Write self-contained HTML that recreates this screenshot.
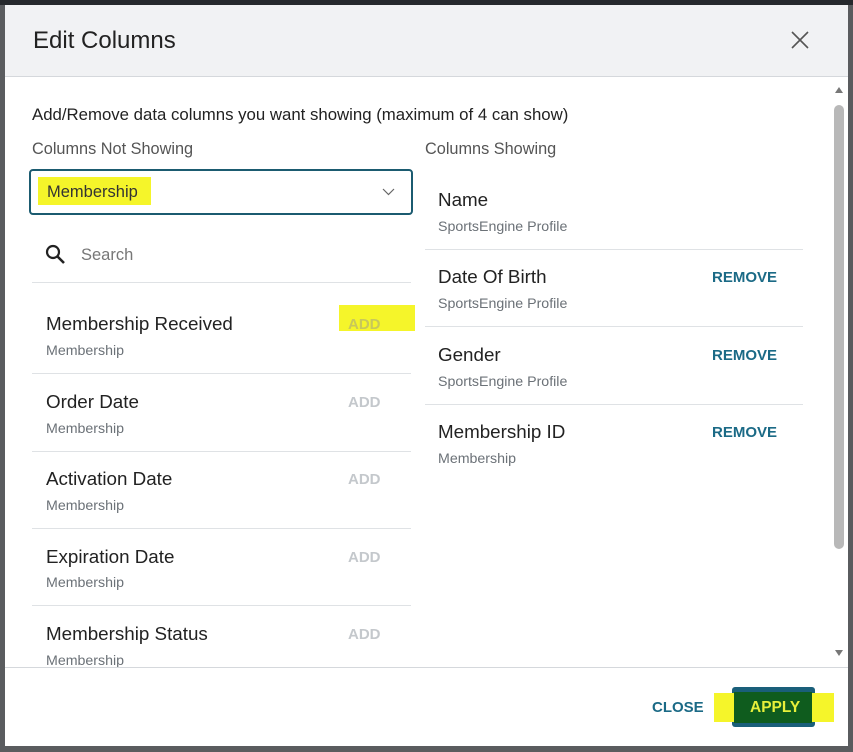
<!DOCTYPE html>
<html><head><style>
body{margin:0;width:853px;height:752px;background:#5a5c5f;position:relative;overflow:hidden;font-family:"Liberation Sans",sans-serif;}
.a{position:absolute}
.dlg{left:5px;top:5px;width:843px;height:740px;background:#fff;}
.hdr{left:0;top:0;width:843px;height:71px;background:#f1f2f4;border-bottom:1px solid #d5d8dc}
.t{color:#222;font-size:18.8px}
.s{color:#6b7177;font-size:14.2px}
.line{height:1px;background:#dfe2e5}
.add{color:#c4c8cc;font-size:15px;font-weight:bold}
.rem{color:#1b6a86;font-size:15px;font-weight:bold}
</style></head><body>
<div class="a" style="left:0;top:0;width:853px;height:5px;background:#26292d"></div>
<div class="a dlg">
 <div class="a hdr"><div class="a" style="left:28px;top:22px;font-size:24px;color:#222">Edit Columns</div>
 <svg class="a" style="left:786px;top:26px" width="18" height="18"><path d="M1 1L17 17M17 1L1 17" stroke="#555" stroke-width="1.6"/></svg></div>
</div>
<div class="a" style="left:32px;top:105px;font-size:16.8px;color:#222">Add/Remove data columns you want showing (maximum of 4 can show)</div>
<div class="a" style="left:32px;top:140px;font-size:16.3px;color:#555">Columns Not Showing</div>
<div class="a" style="left:425px;top:140px;font-size:16.3px;color:#555">Columns Showing</div>
<div class="a" style="left:29px;top:169px;width:380px;height:42px;border:2px solid #1b5b70;border-radius:4px;background:#fff"></div>
<div class="a" style="left:38px;top:177px;width:113px;height:28px;background:#f5f52a"></div>
<div class="a" style="left:47px;top:183px;font-size:16.5px;color:#333">Membership</div>
<svg class="a" style="left:382px;top:188px" width="13" height="8"><path d="M1 1L6.5 6.5L12 1" stroke="#666" fill="none" stroke-width="1.2"/></svg>
<svg class="a" style="left:45px;top:244px" width="22" height="22"><circle cx="8" cy="8" r="6" stroke="#222" stroke-width="2.2" fill="none"/><path d="M12.5 12.5L19 19" stroke="#222" stroke-width="2.6"/></svg>
<div class="a" style="left:81px;top:246px;font-size:16.5px;color:#777">Search</div>
<div class="a line" style="left:32px;top:282px;width:379px"></div>
<div class="a" style="left:339px;top:305px;width:76px;height:26px;background:#f5f52a"></div>
<div class="a t" style="left:46px;top:313px">Membership Received</div><div class="a s" style="left:46px;top:343px">Membership</div><div class="a add" style="left:348px;top:316px;color:#c8c85a">ADD</div>
<div class="a line" style="left:32px;top:373px;width:379px"></div>
<div class="a t" style="left:46px;top:391px">Order Date</div><div class="a s" style="left:46px;top:421px">Membership</div><div class="a add" style="left:348px;top:394px">ADD</div>
<div class="a line" style="left:32px;top:451px;width:379px"></div>
<div class="a t" style="left:46px;top:468px">Activation Date</div><div class="a s" style="left:46px;top:498px">Membership</div><div class="a add" style="left:348px;top:471px">ADD</div>
<div class="a line" style="left:32px;top:528px;width:379px"></div>
<div class="a t" style="left:46px;top:546px">Expiration Date</div><div class="a s" style="left:46px;top:575px">Membership</div><div class="a add" style="left:348px;top:549px">ADD</div>
<div class="a line" style="left:32px;top:605px;width:379px"></div>
<div class="a t" style="left:46px;top:623px">Membership Status</div><div class="a s" style="left:46px;top:653px">Membership</div><div class="a add" style="left:348px;top:626px">ADD</div>
<div class="a t" style="left:438px;top:189px">Name</div><div class="a s" style="left:438px;top:219px">SportsEngine Profile</div>
<div class="a line" style="left:425px;top:249px;width:378px"></div>
<div class="a t" style="left:438px;top:266px">Date Of Birth</div><div class="a s" style="left:438px;top:296px">SportsEngine Profile</div><div class="a rem" style="left:712px;top:269px">REMOVE</div>
<div class="a line" style="left:425px;top:326px;width:378px"></div>
<div class="a t" style="left:438px;top:344px">Gender</div><div class="a s" style="left:438px;top:374px">SportsEngine Profile</div><div class="a rem" style="left:712px;top:347px">REMOVE</div>
<div class="a line" style="left:425px;top:404px;width:378px"></div>
<div class="a t" style="left:438px;top:421px">Membership ID</div><div class="a s" style="left:438px;top:451px">Membership</div><div class="a rem" style="left:712px;top:424px">REMOVE</div>
<div class="a" style="left:835px;top:87px;width:0;height:0;border:4px solid transparent;border-bottom:6px solid #777;border-top:0"></div>
<div class="a" style="left:834px;top:105px;width:10px;height:444px;background:#b8b8b8;border-radius:5px"></div>
<div class="a" style="left:835px;top:650px;width:0;height:0;border:4px solid transparent;border-top:6px solid #777;border-bottom:0"></div>
<div class="a" style="left:5px;top:667px;width:843px;height:78px;background:#fff;border-top:1px solid #d5d8dc"></div>
<div class="a rem" style="left:652px;top:699px;font-size:15px">CLOSE</div>
<div class="a" style="left:732px;top:687px;width:83px;height:40px;background:#1a5f7a;border-radius:3px"></div>
<div class="a" style="left:714px;top:693px;width:120px;height:29px;background:#f5f52a"></div>
<div class="a" style="left:734px;top:692px;width:78px;height:31px;background:#0f5c1e"></div>
<div class="a" style="left:750px;top:699px;font-size:15.5px;font-weight:bold;color:#e6f03a">APPLY</div>
</body></html>
